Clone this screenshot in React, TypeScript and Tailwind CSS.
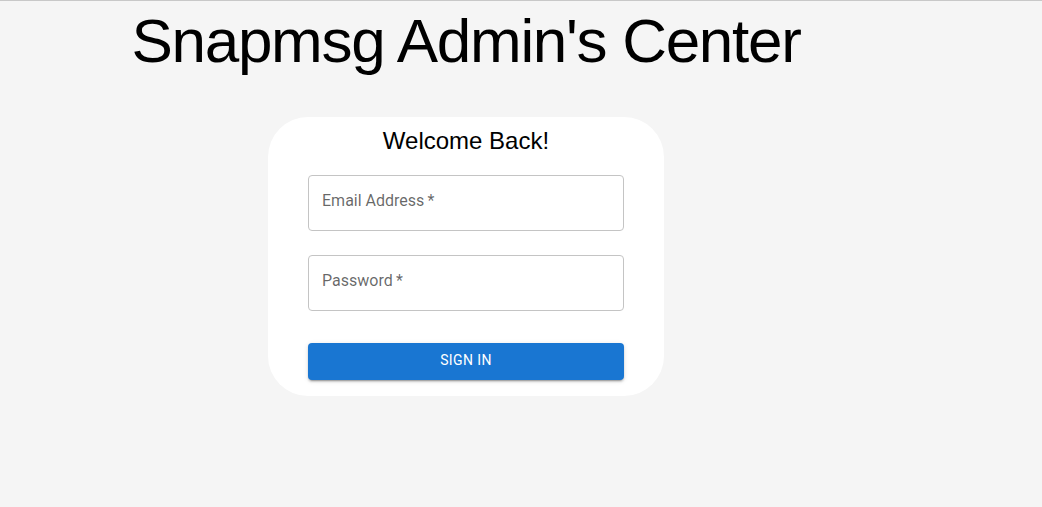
export default function App() {
  return (
    <div className="min-h-screen bg-[#f5f5f5] border-t border-[#c8c8c8] font-['Liberation_Sans',Arial,sans-serif]">
      <div className="w-[932px] flex flex-col items-center">
        <h1 className="mt-[5px] text-[62px] leading-[69px] tracking-[-1.3px] text-black">Snapmsg Admin's Center</h1>
        <div className="mt-[42px] w-[396px] bg-white rounded-[40px] px-10 pt-[10px] pb-4">
          <h2 className="text-center text-[24px] leading-[28px] text-black">Welcome Back!</h2>
          <div className="mt-5 h-14 rounded border border-[#c4c4c4] flex items-start pt-[13px] px-[13px]">
            <span className="font-['Roboto',sans-serif] text-base leading-[23px] text-black/60">Email Address&thinsp;*</span>
          </div>
          <div className="mt-6 h-14 rounded border border-[#c4c4c4] flex items-start pt-[13px] px-[13px]">
            <span className="font-['Roboto',sans-serif] text-base leading-[23px] text-black/60">Password&thinsp;*</span>
          </div>
          <button className="mt-8 w-full h-[37px] pb-[3px] rounded bg-[#1976d2] text-white font-['Roboto',sans-serif] text-sm font-normal uppercase tracking-[0.4px] shadow-[0_3px_1px_-2px_rgba(0,0,0,0.2),0_2px_2px_0_rgba(0,0,0,0.14),0_1px_5px_0_rgba(0,0,0,0.12)]">
            Sign In
          </button>
        </div>
      </div>
    </div>
  );
}
